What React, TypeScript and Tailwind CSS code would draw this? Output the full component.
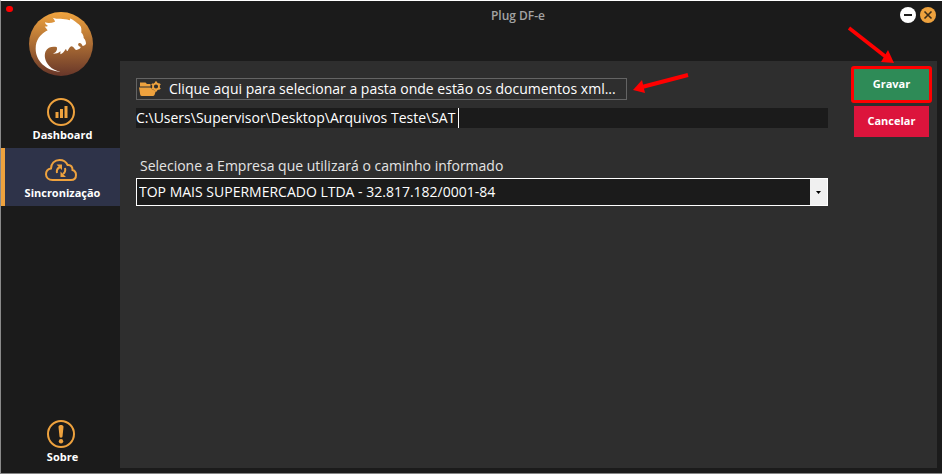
import { useState } from "react";
import type { ReactNode } from "react";

const companies = ["TOP MAIS SUPERMERCADO LTDA - 32.817.182/0001-84"];

function Logo() {
  return (
    <svg viewBox="0 0 192 192" className="size-16" aria-label="Plug DF-e">
      <defs>
        <linearGradient id="logo" x1="0" y1="0" x2="0" y2="1">
          <stop offset="0" stopColor="#f0a43f" />
          <stop offset="1" stopColor="#673629" />
        </linearGradient>
      </defs>
      <circle cx="96" cy="96" r="96" fill="url(#logo)" />
      <path
        fill="#fff"
        d="M95 179C50 176 20 146 20 110C20 84 34 66 56 55C51 50 53 48 47 44C52 44 54 43 57 42C52 38 48 36 48 31C58 35 68 33 78 29C77 23 74 20 71 17C84 23 104 17 121 25C124 24 124 21 122 19C134 24 141 30 145 34C151 38 156 42 157 50L157 62C162 66 164 72 164 78C169 83 171 89 171 95C168 100 164 102 160 101C158 95 154 91 149 94C145 98 148 103 155 105C154 112 147 112 143 114C136 114 136 104 127 103C121 105 119 112 116 117C111 116 112 111 111 110C106 118 101 124 94 127C94 123 95 120 94 118C88 124 82 125 72 125C82 121 86 113 83 105C70 102 56 105 50 118C44 132 49 150 61 162C70 172 82 177 95 179Z"
      />
    </svg>
  );
}

function ChartIcon() {
  return (
    <svg viewBox="0 0 28 28" className="size-7" fill="none" stroke="#eea23e">
      <circle cx="14" cy="14" r="13" strokeWidth="2" />
      <path d="M10 20v-6M14.5 20v-9M19 20V8" strokeWidth="3" />
    </svg>
  );
}

function CloudIcon() {
  return (
    <svg viewBox="0 0 32 22" className="h-[22px] w-8" fill="none" stroke="#eea23e" strokeWidth="2">
      <path d="M7.5 21C3.5 21 1 18.5 1 15.3C1 12 3.2 10 6 9.5C6 4.5 9.5 1 14.5 1C18.5 1 21.3 3 22.6 6C26 5.6 27.6 8 27.5 11C29.8 11.7 31 13.6 31 16C31 19 29 21 26 21Z" />
      <path d="M12 14Q11 10 15 8M20 9Q21 13 18 15" />
      <path d="M11.5 5.5h5.500V11ZM21 18h-5.500V12.500Z" fill="#eea23e" stroke="none" />
    </svg>
  );
}

function AlertIcon() {
  return (
    <svg viewBox="0 0 28 28" className="size-7" fill="#eea23e">
      <circle cx="14" cy="14" r="13" fill="none" stroke="#eea23e" strokeWidth="2" />
      <path d="M11.5 7c0-2.6 5-2.6 5 0l-1 9.500c-.2 1.600-2.800 1.600-3 0Z" />
      <circle cx="14" cy="21.200" r="2.200" />
    </svg>
  );
}

function FolderIcon() {
  return (
    <svg viewBox="0 0 22 16" className="h-4 w-[22px] shrink-0" fill="#eea23e">
      <path d="M1 1.500h5.500l1.500 1.500h3.500v2.500H1Z" />
      <path d="M0 6.500h11.500q1.500 3 5.500 3L15.500 14q-.5 1-1.500 1H3q-1.500 0-1.700-1Z" />
      <circle cx="17" cy="5.500" r="3" fill="none" stroke="#eea23e" strokeWidth="1.800" />
      <path
        d="M17 .5v2M17 8.500v2M12.700 3l1.700 1M19.600 7l1.700 1M12.700 8l1.700-1M19.600 4l1.700-1"
        stroke="#eea23e"
        strokeWidth="2"
      />
    </svg>
  );
}

function NavItem({ label, active, children }: { label: string; active?: boolean; children: ReactNode }) {
  return (
    <a
      href="#"
      className={
        active
          ? "flex h-[58px] flex-col items-center border-l-4 border-[#eea23e] bg-[#2e3349] pt-2"
          : "flex h-[58px] flex-col items-center border-l-4 border-transparent pt-2"
      }
    >
      <span className="mr-[3px] flex h-7 items-center">{children}</span>
      <span className="mt-px text-[11px] leading-4 font-bold">{label}</span>
    </a>
  );
}

export default function App() {
  const [path, setPath] = useState("C:\\Users\\Supervisor\\Desktop\\Arquivos Teste\\SAT");

  return (
    <div className="relative flex min-h-screen border-t border-b border-l border-t-white border-b-[#858585] border-l-[#8a8a8a] bg-[#1b1b1b] font-['Open_Sans','Noto_Sans',sans-serif] text-white">
      <span className="absolute top-[5px] left-[5px] h-[6px] w-[7px] rounded-full bg-[#ff0000]" />

      <aside className="flex w-[119px] shrink-0 flex-col pt-[11px] pb-[3px]">
        <div className="flex justify-center pb-[14px]">
          <Logo />
        </div>
        <nav className="flex flex-1 flex-col">
          <NavItem label="Dashboard">
            <ChartIcon />
          </NavItem>
          <NavItem label="Sincronização" active>
            <CloudIcon />
          </NavItem>
          <div className="mt-auto">
            <NavItem label="Sobre">
              <AlertIcon />
            </NavItem>
          </div>
        </nav>
      </aside>

      <div className="flex flex-1 flex-col pr-[5px] pb-[5px]">
        <header className="flex h-[60px] items-start pt-[6px] pr-px">
          <h1 className="flex-1 pt-px pl-4 text-center text-xs leading-4 font-semibold text-[#a3a3a3]">Plug DF-e</h1>
          <div className="flex gap-1">
            <button type="button" aria-label="Minimizar" className="size-4">
              <svg viewBox="0 0 16 16">
                <circle cx="8" cy="8" r="8" fill="#fff" />
                <path d="M4 8h8" stroke="#1b1b1b" strokeWidth="2" />
              </svg>
            </button>
            <button type="button" aria-label="Fechar" className="size-4">
              <svg viewBox="0 0 16 16">
                <circle cx="8" cy="8" r="8" fill="#eea23e" />
                <path d="M4.500 4.500l7 7M11.500 4.500l-7 7" stroke="#3a2c1a" strokeWidth="1.600" />
              </svg>
            </button>
          </div>
        </header>

        <main className="flex flex-1 gap-[26px] bg-[#2e2e2e] pt-2 pr-2 pl-4">
          <form className="flex flex-1 flex-col items-start pt-[9px]">
            <div className="relative">
              <button
                type="button"
                className="flex h-[22px] w-[491px] items-center gap-2 border border-[#646464] pl-[2px] text-sm leading-5 whitespace-nowrap"
              >
                <FolderIcon />
                Clique aqui para selecionar a pasta onde estão os documentos xml...
              </button>
              <svg viewBox="0 0 56 20" className="absolute -top-[5px] left-[497px] h-5 w-14" fill="#ff0000">
                <path d="M0 17L9 7L12 20Z" />
                <path d="M9 14L55 2" stroke="#ff0000" strokeWidth="4" />
              </svg>
            </div>

            <div className="relative mt-2 w-full">
              <input
                aria-label="Pasta dos documentos xml"
                value={path}
                onChange={(e) => setPath(e.target.value)}
                className="block h-5 w-full bg-[#1b1b1b] text-sm leading-5 outline-none"
              />
              <span className="absolute top-0 left-[322px] h-5 w-px bg-white" />
            </div>

            <label htmlFor="company" className="mt-7 pl-1 text-sm leading-5 text-[#e4e4e4]">
              Selecione a Empresa que utilizará o caminho informado
            </label>
            <div className="mt-[2px] flex h-7 w-full border border-white bg-[#1b1b1b]">
              <select id="company" className="flex-1 appearance-none pl-[2px] text-sm leading-5 outline-none">
                {companies.map((c) => (
                  <option key={c}>{c}</option>
                ))}
              </select>
              <span className="flex w-[17px] items-center justify-center bg-[#f0f0f0]">
                <svg viewBox="0 0 5 3" className="h-[3px] w-[5px]">
                  <path d="M0 0h5L2.500 3Z" fill="#000" />
                </svg>
              </span>
            </div>
          </form>

          <div className="flex w-[75px] shrink-0 flex-col gap-[6px]">
            <div className="relative">
              <button type="button" className="block h-[31px] w-full bg-[#2e8b57] text-[11px] font-bold">
                Gravar
              </button>
              <span className="pointer-events-none absolute -inset-[3px] rounded-[3px] border-3 border-[#ff0000]" />
              <svg viewBox="0 0 48 38" className="absolute -top-[43px] -left-[7px] h-[38px] w-12" fill="#ff0000">
                <path d="M47 37L41 24L34 36Z" />
                <path d="M2 2L39 31" stroke="#ff0000" strokeWidth="3.600" />
              </svg>
            </div>
            <button type="button" className="h-[31px] bg-[#dc143c] text-[11px] font-bold">
              Cancelar
            </button>
          </div>
        </main>
      </div>
    </div>
  );
}
